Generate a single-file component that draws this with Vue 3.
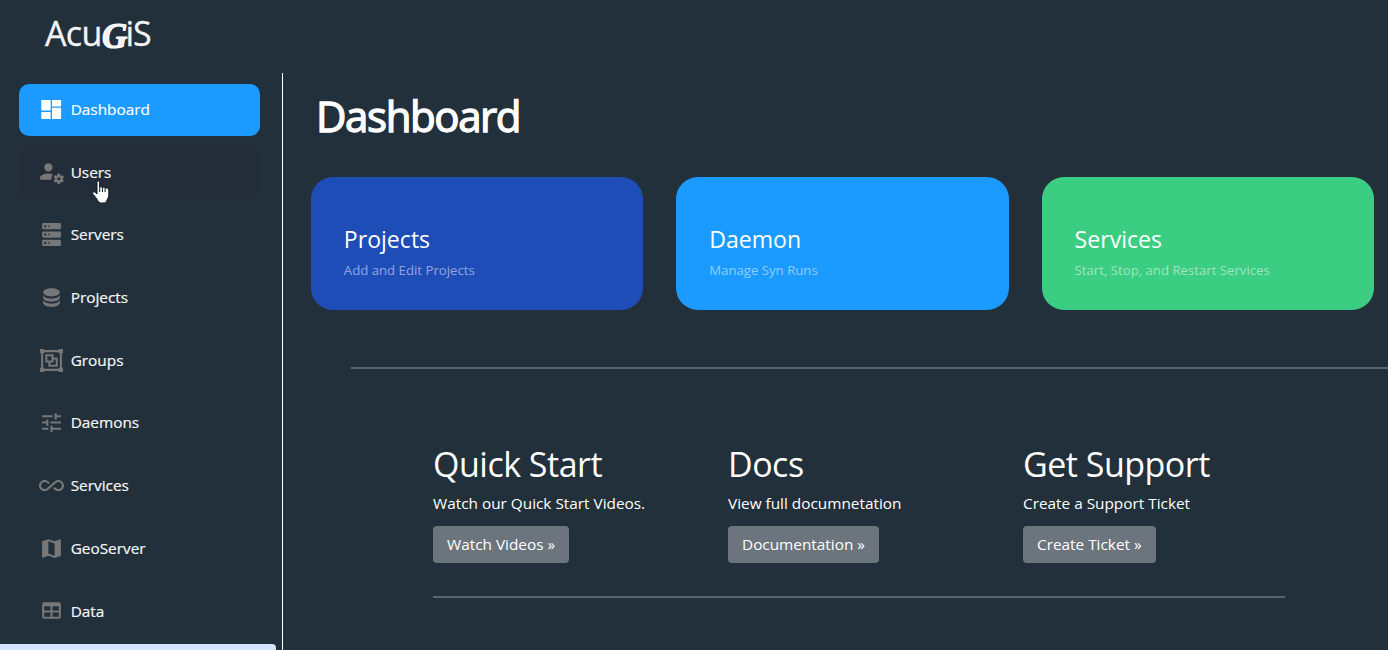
<script setup>
const items = [
  { label: 'Dashboard', state: 'active', path: 'M2.2,2.8H11.2V13H2.2M12.5,2.8H21.2V9H12.5M2.2,14.5H11.2V21.2H2.2M12.5,10.4H21.2V21.2H12.5Z' },
  { label: 'Users', state: 'hover', path: 'M9,4A4,4 0 0,0 5,8A4,4 0 0,0 9,12A4,4 0 0,0 13,8A4,4 0 0,0 9,4M9,14C6.33,14 1,15.33 1,18V20H12.08C12.03,19.67 12,19.34 12,19C12,17.5 12.5,15.8 13.41,14.5C11.88,14.16 10.18,14 9,14Z', gear: true },
  { label: 'Servers', path: 'M4,1H20A1,1 0 0,1 21,2V6A1,1 0 0,1 20,7H4A1,1 0 0,1 3,6V2A1,1 0 0,1 4,1M4,9H20A1,1 0 0,1 21,10V14A1,1 0 0,1 20,15H4A1,1 0 0,1 3,14V10A1,1 0 0,1 4,9M4,17H20A1,1 0 0,1 21,18V22A1,1 0 0,1 20,23H4A1,1 0 0,1 3,22V18A1,1 0 0,1 4,17M9,5H10V3H9V5M9,13H10V11H9V13M9,21H10V19H9V21M5,3V5H7V3H5M5,11V13H7V11H5M5,19V21H7V19H5Z' },
  { label: 'Projects', path: 'M12,3C7.58,3 4,4.79 4,7C4,9.21 7.58,11 12,11C16.42,11 20,9.21 20,7C20,4.79 16.42,3 12,3M4,9V12C4,14.21 7.58,16 12,16C16.42,16 20,14.21 20,12V9C20,11.21 16.42,13 12,13C7.58,13 4,11.21 4,9M4,14V17C4,19.21 7.58,21 12,21C16.42,21 20,19.21 20,17V14C20,16.21 16.42,18 12,18C7.58,18 4,16.21 4,14Z' },
  { label: 'Groups', path: 'M1,1V5H2V19H1V23H5V22H19V23H23V19H22V5H23V1H19V2H5V1M5,4H19V5H20V19H19V20H5V19H4V5H5M6,6V14H9V18H18V9H14V6M8,8H12V12H8M14,11H16V16H11V14H14' },
  { label: 'Daemons', path: 'M3 17v2h6v-2H3zM3 5v2h10V5H3zm10 16v-2h8v-2h-8v-2h-2v6h2zM7 9v2H3v2h4v2h2V9H7zm14 4v-2H11v2h10zm-6-4h2V7h4V5h-4V3h-2v6z' },
  { label: 'Services', path: 'M18.6 6.62c-1.44 0-2.8.56-3.77 1.53L12 10.66 10.48 12h.01L7.8 14.39c-.64.64-1.49.99-2.4.99-1.87 0-3.39-1.51-3.39-3.38S3.53 8.62 5.4 8.62c.91 0 1.76.35 2.44 1.03l1.13 1 1.51-1.34L9.22 8.2C8.2 7.18 6.84 6.62 5.4 6.62 2.42 6.62 0 9.04 0 12s2.42 5.38 5.4 5.38c1.44 0 2.8-.56 3.77-1.53l2.83-2.5.01.01L13.52 12h-.01l2.69-2.39c.64-.64 1.49-.99 2.4-.99 1.87 0 3.39 1.51 3.39 3.38s-1.52 3.38-3.39 3.38c-.9 0-1.76-.35-2.44-1.03l-1.14-1.01-1.51 1.34 1.27 1.12c1.02 1.01 2.37 1.57 3.82 1.57 2.98 0 5.4-2.41 5.4-5.38s-2.42-5.37-5.4-5.37z' },
  { label: 'GeoServer', path: 'M15,19L9,16.89V5L15,7.11M20.5,3C20.44,3 20.39,3 20.34,3L15,5.1L9,3L3.36,4.9C3.15,4.97 3,5.15 3,5.38V20.5A.5.5 0 0,0 3.5,21C3.55,21 3.61,21 3.66,20.97L9,18.9L15,21L20.64,19.1C20.85,19 21,18.85 21,18.62V3.5A.5.5 0 0,0 20.5,3Z' },
  { label: 'Data', path: 'M5,4H19A2,2 0 0,1 21,6V18A2,2 0 0,1 19,20H5A2,2 0 0,1 3,18V6A2,2 0 0,1 5,4M5,8V12H11V8H5M13,8V12H19V8H13M5,14V18H11V14H5M13,14V18H19V14H13Z' },
]
const gearPath = 'M17 12C16.87 12 16.76 12.09 16.74 12.21L16.55 13.53C16.25 13.66 15.96 13.82 15.7 14L14.46 13.5C14.35 13.5 14.22 13.5 14.15 13.63L13.15 15.36C13.09 15.47 13.11 15.6 13.21 15.68L14.27 16.5C14.25 16.67 14.24 16.83 14.24 17C14.24 17.17 14.25 17.33 14.27 17.5L13.21 18.32C13.12 18.4 13.09 18.53 13.15 18.64L14.15 20.37C14.21 20.5 14.34 20.5 14.46 20.5L15.7 20C15.96 20.18 16.24 20.35 16.55 20.47L16.74 21.79C16.76 21.91 16.86 22 17 22H19C19.11 22 19.22 21.91 19.24 21.79L19.43 20.47C19.73 20.34 20 20.18 20.27 20L21.5 20.5C21.63 20.5 21.76 20.5 21.83 20.37L22.83 18.64C22.89 18.53 22.86 18.4 22.77 18.32L21.7 17.5C21.72 17.33 21.74 17.17 21.74 17C21.74 16.83 21.73 16.67 21.7 16.5L22.76 15.68C22.85 15.6 22.88 15.47 22.82 15.36L21.82 13.63C21.76 13.5 21.63 13.5 21.5 13.5L20.27 14C20 13.82 19.73 13.65 19.42 13.53L19.23 12.21C19.22 12.09 19.11 12 19 12H17ZM18 15.5A1.5 1.5 0 1 1 18 18.5A1.5 1.5 0 1 1 18 15.5Z'
const cards = [
  { title: 'Projects', text: 'Add and Edit Projects', tone: 'navy' },
  { title: 'Daemon', text: 'Manage Syn Runs', tone: 'blue' },
  { title: 'Services', text: 'Start, Stop, and Restart Services', tone: 'green' },
]
const links = [
  { title: 'Quick Start', text: 'Watch our Quick Start Videos.', button: 'Watch Videos »' },
  { title: 'Docs', text: 'View full documnetation', button: 'Documentation »' },
  { title: 'Get Support', text: 'Create a Support Ticket', button: 'Create Ticket »' },
]
</script>

<template>
  <div class="page">
    <header class="topbar">
      <div class="logo"><span class="acu">Acu</span><span class="g">G</span><span class="is">iS</span></div>
    </header>
    <div class="body">
      <aside class="sidebar">
        <nav class="menu">
          <a v-for="item in items" :key="item.label" class="item" :class="item.state">
            <svg class="icon" viewBox="0 0 24 24">
              <path :d="item.path" fill-rule="evenodd" />
              <path v-if="item.gear" :d="gearPath" fill-rule="evenodd" transform="translate(1 2)" />
            </svg>
            <span>{{ item.label }}</span>
          </a>
        </nav>
      </aside>
      <main class="main">
        <h1>Dashboard</h1>
        <section class="cards">
          <article v-for="card in cards" :key="card.title" class="card" :class="card.tone">
            <h3>{{ card.title }}</h3>
            <p>{{ card.text }}</p>
          </article>
        </section>
        <hr class="rule wide" />
        <section class="links">
          <div v-for="link in links" :key="link.title" class="link">
            <h2>{{ link.title }}</h2>
            <p>{{ link.text }}</p>
            <a class="btn">{{ link.button }}</a>
          </div>
        </section>
        <hr class="rule narrow" />
      </main>
    </div>
    <div class="status"></div>
    <svg class="cursor" viewBox="0 0 20 25">
      <path d="M5 2.2C5 .6 7.6.6 7.6 2.2V7.4C8.2 6.5 10 6.6 10.3 7.7C11 6.8 12.8 7.1 13 8.3C14 7.5 16.8 7.9 16.8 10V15.5C16.8 17.5 15.4 18.8 14.8 20.4C14.3 22.2 13 23 11 23H9.5C7.8 23 6.7 22.3 5.9 20.8C4.7 18.5 2.8 16.2 1 14.2C-.2 12.4 2 11.2 3.4 12.5L5 14Z" fill="#fff" stroke="#111a24" stroke-width="1" />
      <path d="M7.7 7.5V12M10.4 8V12M13.1 8.5V12" fill="none" stroke="#111a24" stroke-width="1" />
    </svg>
  </div>
</template>

<style>
html, body { background: #22303b; overflow: hidden; }
</style>

<style scoped>
* { box-sizing: border-box; }
.page {
  position: relative;
  width: 1388px;
  height: 650px;
  overflow: hidden;
  background: #22303b;
  color: #fff;
  font-family: "Open Sans", "Noto Sans", sans-serif;
  font-size: 15.35px;
}
.topbar { height: 73px; padding: 10px 0 0 45px; }
.logo { display: flex; height: 46px; line-height: 46px; font-size: 34px; color: #f4f4f5; -webkit-text-stroke: 0.3px #f4f4f5; }
.acu { width: 57px; letter-spacing: -0.7px; }
.g {
  width: 23px;
  padding-top: 4px;
  font-family: "Liberation Serif", serif;
  font-weight: 700;
  font-style: italic;
  font-size: 35px;
  letter-spacing: -3px;
  -webkit-text-stroke: 1.2px #fff;
}
.is { padding-left: 0.5px; letter-spacing: -1.2px; }
.body { display: flex; height: 577px; }
.sidebar { flex: none; width: 283px; padding: 11px 22px 0 19px; border-right: 1px solid #fff; overflow: hidden; }
.menu { display: flex; flex-direction: column; gap: 10.7px; }
.item {
  display: flex;
  flex: none;
  align-items: center;
  height: 52px;
  padding: 0 0 2px 19.7px;
  border-radius: 10px;
  line-height: 22px;
  color: #f5f6f7;
  -webkit-text-stroke: 0.2px #f5f6f7;
}
.icon { flex: none; width: 25px; height: 25px; margin: 0.6px 7px 0 0; fill: #777; }
.item.active { background: #1b9aff; color: #fff; }
.item.active .icon { fill: #fff; }
.item.hover { background: #222d39; }
.main { flex: 1; min-width: 0; padding-left: 28px; overflow: hidden; }
h1 { margin: 14px 0 0 5px; font-size: 42px; line-height: 58px; font-weight: 400; letter-spacing: -1.4px; -webkit-text-stroke: 1.3px #fff; }
.cards { display: grid; grid-template-columns: repeat(3, 332.3px); gap: 33.1px; margin-top: 32px; }
.card { height: 133px; padding: 46px 32.8px 0; border-radius: 22px; }
.navy { background: #1f4db8; }
.blue { background: #1b9aff; }
.green { background: #3bcd81; }
.card h3 { margin: 0; font-size: 23.1px; line-height: 33px; font-weight: 400; }
.card p { margin: 4px 0 0; font-size: 13.2px; line-height: 20px; color: rgba(255, 255, 255, 0.5); }
.rule { height: 2px; border: 0; background: #59636b; }
.wide { margin: 57px 0 0 40px; }
.links { display: grid; grid-template-columns: repeat(3, 295px); margin: 75px 0 0 122px; }
.link h2 { margin: 0; font-size: 34px; line-height: 40px; font-weight: 400; letter-spacing: -0.5px; }
.link p { margin: 8px 0 11px; font-size: 15.35px; line-height: 23px; }
.btn { display: inline-block; height: 37px; padding: 0 14.4px 0 14px; border-radius: 4px; background: #6c757d; font-size: 15.35px; line-height: 37px; vertical-align: top; }
.narrow { width: 852px; margin: 33px 0 0 122px; }
.status { position: absolute; left: 0; bottom: 0; width: 276px; height: 6px; border-radius: 0 4px 0 0; background: #d3e3fd; }
.cursor { position: absolute; left: 92px; top: 180px; width: 20px; height: 25px; }
</style>
